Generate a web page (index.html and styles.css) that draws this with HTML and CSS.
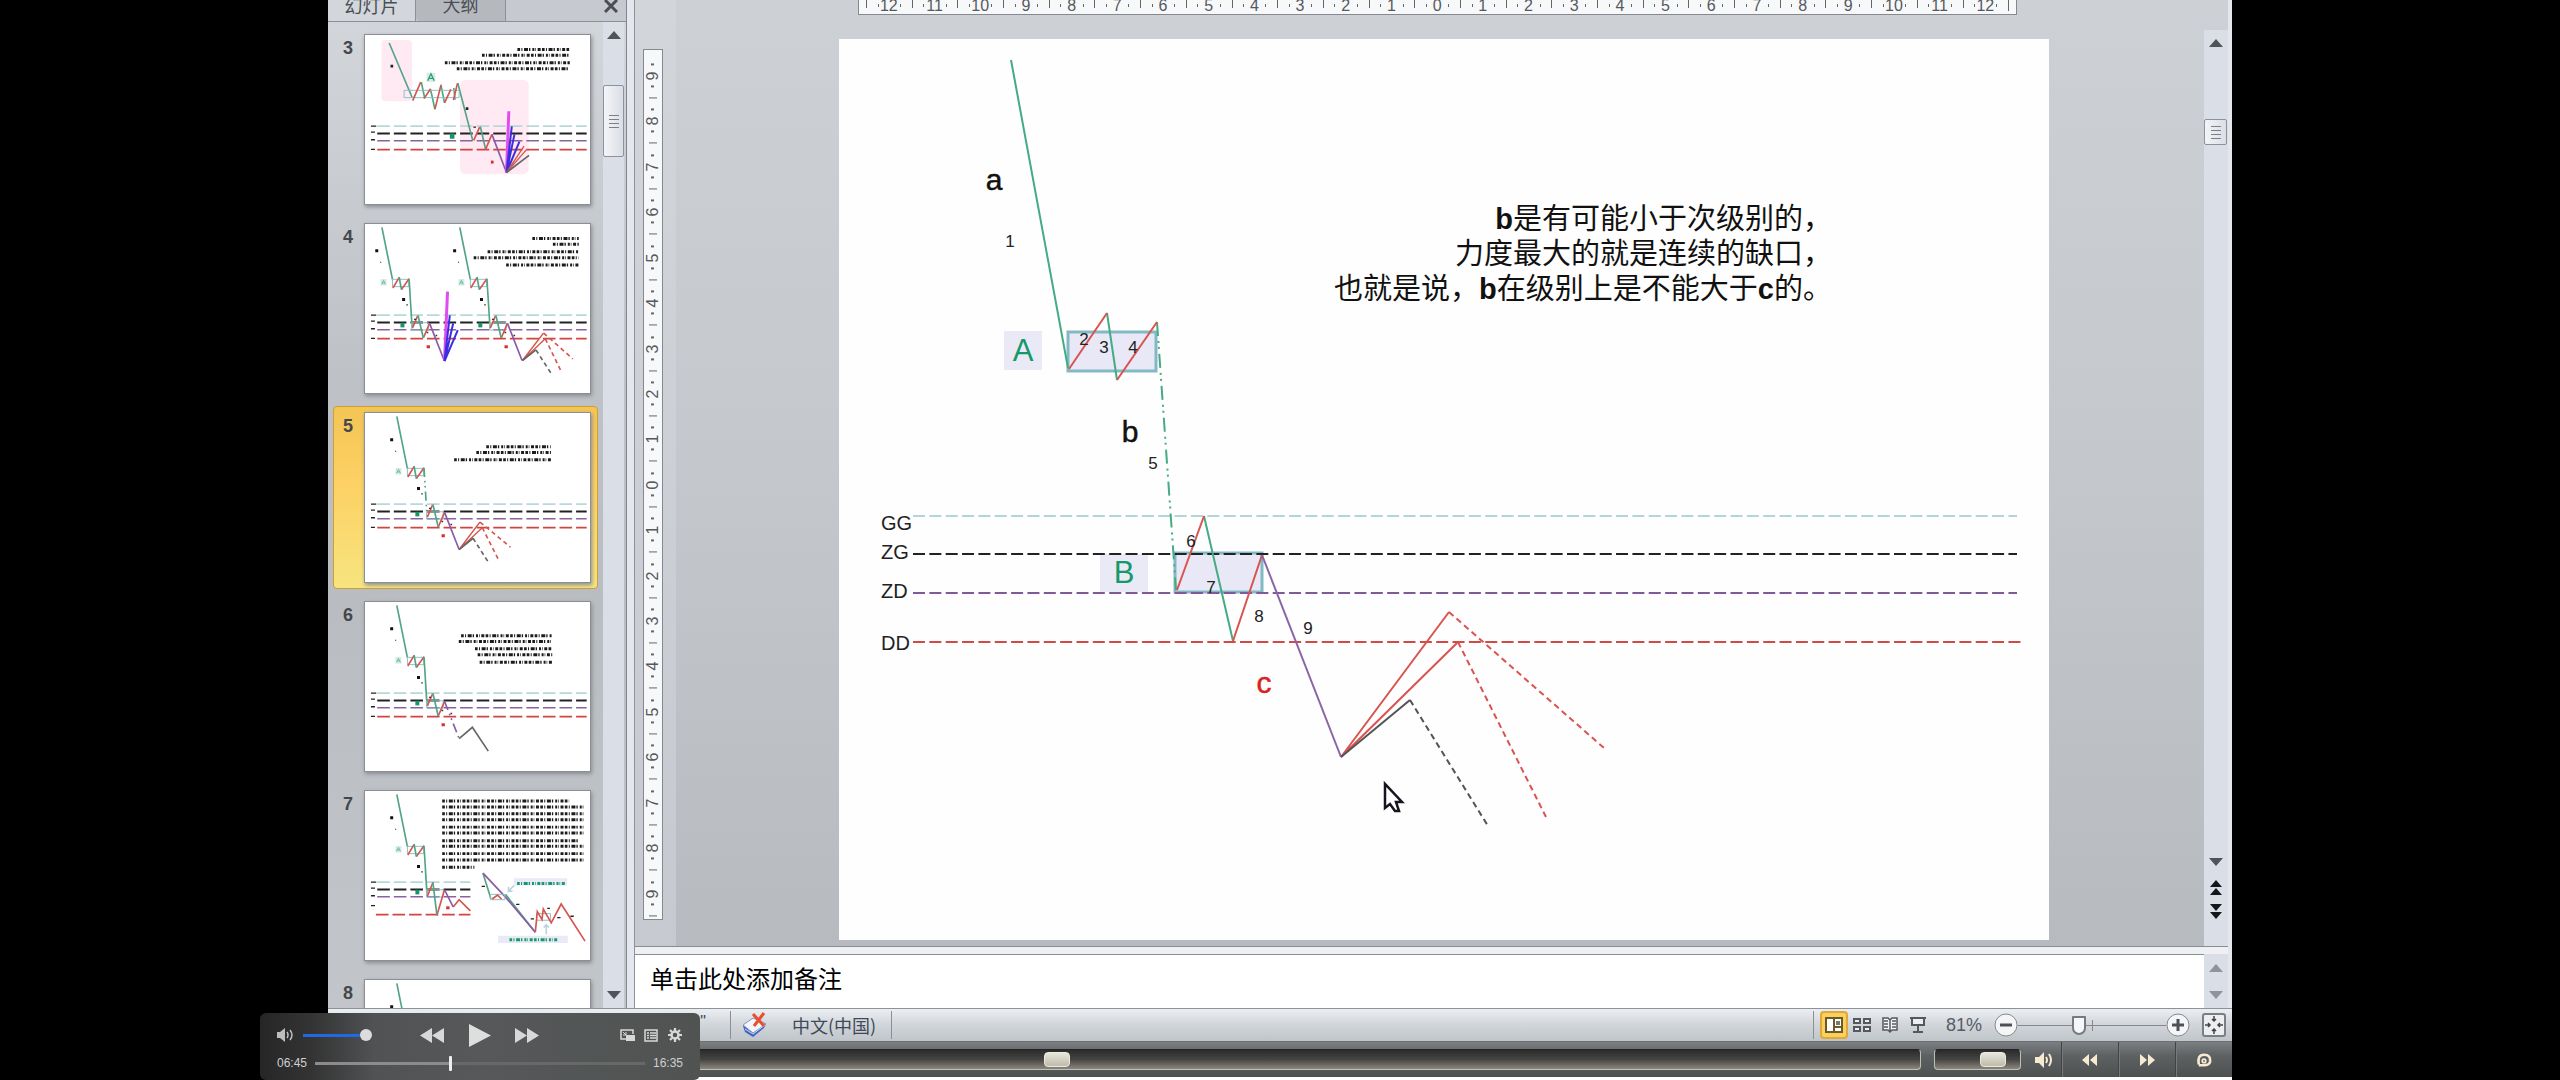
FILE: index.html
```html
<!DOCTYPE html>
<html lang="zh-CN">
<head>
<meta charset="utf-8">
<title>幻灯片</title>
<link rel="stylesheet" href="styles.css">
</head>
<body>
<svg class="defs" aria-hidden="true">
  <defs>
    <g id="levels">
      <g stroke="#222" stroke-width="4"><path d="M18 275h16M18 293h12M18 316h12M18 345h12"/></g>
      <g class="level-lines">
        <path stroke="#b9d8da" d="M37 275H669"/><path stroke="#222" stroke-width="6" d="M37 297H669"/>
        <path stroke="#8a62a0" d="M37 319H669"/><path stroke="#d4433f" d="M37 346H669"/>
      </g>
    </g>
    <g id="start">
      <path class="t-green" d="M96 10 128 168"/>
      <path class="t-box" d="M128 167h49v22h-49z"/>
      <path class="t-red" d="M129 193 148 162M155 198 178 165"/><path class="t-green" d="M148 160 155 198"/>
      <path fill="#d5ebe8" d="M92 166h18v20H92z"/><path stroke="#6fbca3" stroke-width="3" fill="none" d="M95 182l6-12 6 12M97 178h8"/>
      <path fill="#111" d="M76 76h9v9h-9zM91 114h3v3h-3zM157 223h9v9h-9zM170 242h4v4h-4z"/>
    </g>
    <g id="middle">
      <path class="t-box" d="M186 298h50v22h-50z"/>
      <path class="t-red" d="M188 314 204 277M221 344 240 300"/><path class="t-green" d="M205 276 221 344"/>
      <path fill="#16956a" d="M152 298h12v14h-12z"/><path fill="#333" d="M193 286h6v4h-6zM231 325h5v5h-5zM258 334h5v5h-5z"/>
      <path fill="#d4302c" d="M231 366h10v9h-10z"/>
    </g>
    <path id="fall" class="t-green" d="M178 165 187 310"/>
    <path id="last" class="t-purple" d="M240 300 284 412"/>
  </defs>
</svg>

<div class="app">
  <div class="workspace">
    <aside class="panel">
      <header class="tabs">
        <button class="tab active">幻灯片</button><button class="tab">大纲</button>
        <button class="close" aria-label="关闭"><svg width="14" height="13" viewBox="0 0 14 13"><path d="M1 0 13 12M13 0 1 12" stroke="#4b4e54" stroke-width="3"/></svg></button>
      </header>
      <div class="panel-body">
        <ol class="thumbs">
          <li class="item"><span class="num">3</span>
            <svg class="thumb" viewBox="0 0 679 510" preserveAspectRatio="none">
              <rect x="50" y="15" width="92" height="185" rx="12" fill="#ffe9f2"/><rect x="287" y="136" width="207" height="284" rx="16" fill="#ffe9f2"/>
              <use href="#levels"/>
              <path class="t-green" d="M73 24 143 190M170 142 180 190M198 165 211 224M229 150 240 205M268 160 272 195M280 145 325 318M348 276 364 345"/>
              <path class="t-box" d="M118 167h166v22H118z"/>
              <path class="t-red" d="M144 198 168 142M178 192 198 162M211 224 229 152M240 205 259 164M267 196 279 146M328 318 346 278M364 345 383 300"/>
              <path class="t-purple" d="M383 300 427 415"/>
              <path class="t-magenta" d="M427 415 434 230"/><path class="t-blue" d="M427 415 443 276M427 415 451 300M427 415 466 322"/>
              <path class="t-red thin" d="M427 415 480 335M427 415 488 345"/><path class="t-black" d="M427 415 495 363"/>
              <path fill="#d5ebe8" d="M186 114h26v28h-26z"/><path stroke="#2b9f78" stroke-width="4" fill="none" d="M189 138l10-21 10 21M193 131h12"/>
              <path fill="#16956a" d="M256 297h14v16h-14z"/><path fill="#222" d="M77 90h8v8h-8zM304 218h8v8h-8zM327 276h8v4h-8z"/><path fill="#d4302c" d="M380 379h8v9h-8z"/>
              <path class="scribble" d="M460 44H618M353 61H618M241 84H618M277 102H618"/>
            </svg></li>
          <li class="item"><span class="num">4</span>
            <svg class="thumb" viewBox="0 0 679 510" preserveAspectRatio="none">
              <use href="#levels"/>
              <g transform="translate(-45)"><use href="#start"/><use href="#fall"/><use href="#middle"/><use href="#last"/></g>
              <g transform="translate(190)"><use href="#start"/><use href="#fall"/><use href="#middle"/><use href="#last"/></g>
              <path class="t-magenta" d="M240 414 249 204"/><path class="t-blue" d="M240 414 256 276M240 414 266 300M240 414 280 320"/>
              <path class="t-red thin" d="M475 412 539 329M475 412 544 346"/><path class="t-black" d="M475 412 516 380"/>
              <path class="t-red dash" d="M539 329 627 407M544 346 593 447"/><path class="t-black dash" d="M516 380 561 450"/>
              <path class="scribble" d="M505 44H645M567 61H645M370 84H645M328 102H645M426 124H645"/>
            </svg></li>
          <li class="item selected"><span class="num">5</span>
            <svg class="thumb" viewBox="0 0 679 510" preserveAspectRatio="none">
              <use href="#levels"/><use href="#start"/><path class="t-green dashdot" d="M178 165 187 310"/><use href="#middle"/><use href="#last"/>
              <path class="t-red thin" d="M284 412 347 329M284 412 354 346"/><path class="t-black" d="M284 412 326 378"/>
              <path class="t-red dash" d="M347 329 439 405M354 346 405 447"/><path class="t-black dash" d="M326 378 372 450"/>
              <path class="scribble" d="M366 102H561M336 119H561M269 141H561"/>
            </svg></li>
          <li class="item"><span class="num">6</span>
            <svg class="thumb" viewBox="0 0 679 510" preserveAspectRatio="none">
              <use href="#levels"/><use href="#start"/><use href="#fall"/><use href="#middle"/>
              <path class="t-purple dashdot" d="M240 300 284 412"/><path class="t-black" d="M284 412 324 378 372 450"/>
              <path class="scribble" d="M290 102H565M283 119H565M332 141H565M340 159H565M346 182H565"/>
            </svg></li>
          <li class="item"><span class="num">7</span>
            <svg class="thumb" viewBox="0 0 679 510" preserveAspectRatio="none">
              <g stroke="#222" stroke-width="4"><path d="M18 275h16M18 293h12M18 316h12M18 346h12"/></g>
              <g class="level-lines"><path stroke="#b9d8da" d="M37 275H318"/><path stroke="#222" stroke-width="6" d="M37 297H318"/><path stroke="#8a62a0" d="M37 319H318"/><path stroke="#d4433f" d="M33 373H318"/></g>
              <use href="#start"/><use href="#fall"/>
              <path class="t-box" d="M186 298h50v22h-50z"/><path class="t-red" d="M188 318 205 276M217 375 240 298M266 350 284 328 318 362"/><path class="t-green" d="M205 276 217 375"/><path class="t-purple" d="M240 298 266 350"/>
              <path fill="#16956a" d="M152 298h12v14h-12z"/><path fill="#d4302c" d="M245 348h10v9h-10z"/>
              <path class="t-green" d="M356 248 380 325M424 312 514 426"/><path class="t-purple" d="M356 248 422 318 514 426"/>
              <path class="t-box" d="M378 312h44v16h-44zM518 370h42v20h-42z"/><path class="t-red" d="M384 326 400 314 412 326M514 426 520 364 534 388 538 356 562 398 592 341 664 453"/>
              <path fill="#e9e9f7" d="M450 263h160v22H450zM402 437h210v22H402z"/>
              <path class="scribble green" d="M459 279H603M436 449H582"/>
              <path stroke="#b9d5dc" stroke-width="5" fill="none" d="M450 285 433 302v-12M433 302h12M547 432V404M539 412l8-8 8 8"/>
              <path fill="#222" d="M352 286h10v4h-10zM456 340h10v4h-10zM550 352h8v4h-8zM500 384h10v4h-10zM580 380h10v4h-10zM620 376h10v4h-10z"/>
              <path class="scribble" d="M233 30H616M233 48H660M233 69H660M233 87H660M233 109H660M233 127H660M233 150H648M233 167H660M233 189H660M233 208H660M233 230H330"/>
            </svg></li>
          <li class="item"><span class="num">8</span>
            <svg class="thumb" viewBox="0 0 679 510" preserveAspectRatio="none"><use href="#levels"/><use href="#start"/><use href="#fall"/><use href="#middle"/></svg></li>
        </ol>
        <div class="vscroll left-scroll">
          <button class="arrow" aria-label="向上"><svg width="14" height="8"><path d="M7 0 14 8H0z"/></svg></button>
          <span class="grip"></span>
          <button class="arrow" aria-label="向下"><svg width="14" height="8"><path d="M7 8 14 0H0z"/></svg></button>
        </div>
      </div>
    </aside>

    <main class="editor">
      <div class="stage">
        <div class="ruler-col">
          <ol class="ruler vertical"><li>9</li><li>8</li><li>7</li><li>6</li><li>5</li><li>4</li><li>3</li><li>2</li><li>1</li><li>0</li><li>1</li><li>2</li><li>3</li><li>4</li><li>5</li><li>6</li><li>7</li><li>8</li><li>9</li></ol>
        </div>
        <div class="canvas">
          <ol class="ruler horizontal"><li>12</li><li>11</li><li>10</li><li>9</li><li>8</li><li>7</li><li>6</li><li>5</li><li>4</li><li>3</li><li>2</li><li>1</li><li>0</li><li>1</li><li>2</li><li>3</li><li>4</li><li>5</li><li>6</li><li>7</li><li>8</li><li>9</li><li>10</li><li>11</li><li>12</li></ol>
          <div class="slide">
            <svg class="drawing" viewBox="840 39 1210 901" preserveAspectRatio="none">
              <g class="labels-bg" fill="#eaeaf6"><path d="M1005 331h38v39h-38zM1101 554h48v38h-48z"/></g>
              <g fill="#e8e8f6" stroke="#82b9c4" stroke-width="3"><path d="M1069 332h88v39h-88zM1176 553h87v39h-87z"/></g>
              <g class="dashes">
                <path stroke="#b2d6d6" d="M914 516H2018"/><path stroke="#222" d="M914 554H2018"/>
                <path stroke="#80599b" d="M914 593H2018"/><path stroke="#d24a46" d="M914 642H2025"/>
              </g>
              <g fill="none" stroke-width="2">
                <path stroke="#45ab84" d="M1012 60 1069 368M1108 313 1118 380M1205 516 1234 641"/>
                <path stroke="#45ab84" stroke-dasharray="14 5 2 4 2 5" d="M1158 322 1177 590"/>
                <path stroke="#d9534f" d="M1070 369 1108 313M1118 380 1158 322M1178 590 1205 516M1234 641 1263 555M1342 757 1450 612M1342 757 1459 642"/>
                <path stroke="#8a65a6" d="M1263 555 1342 757"/>
                <path stroke="#555" d="M1342 757 1411 700"/>
                <path stroke="#555" stroke-dasharray="6 4" d="M1411 700 1489 826"/>
                <path stroke="#d9534f" stroke-dasharray="6 4" d="M1450 612 1605 748M1459 642 1547 817"/>
              </g>
              <g class="wave">
                <text x="995" y="190">a</text><text x="1131" y="442">b</text><text class="c" x="1265" y="693">c</text>
              </g>
              <g class="center-name"><text x="1024" y="361">A</text><text x="1125" y="583">B</text></g>
              <g class="index">
                <text x="1011" y="247">1</text><text x="1085" y="345">2</text><text x="1105" y="353">3</text><text x="1134" y="353">4</text><text x="1154" y="469">5</text>
                <text x="1192" y="547">6</text><text x="1212" y="593">7</text><text x="1260" y="622">8</text><text x="1309" y="634">9</text>
              </g>
              <g class="level-name"><text x="882" y="530">GG</text><text x="882" y="559">ZG</text><text x="882" y="598">ZD</text><text x="882" y="650">DD</text></g>
              <path fill="#fff" stroke="#15151f" stroke-width="2.5" d="M1386 784v24l5-4 5 7h4l-3-9h6z"/>
            </svg>
            <p class="remark"><b>b</b>是有可能小于次级别的，<br>力度最大的就是连续的缺口，<br>也就是说，<b>b</b>在级别上是不能大于<b>c</b>的。</p>
          </div>
        </div>
        <div class="vscroll right-scroll">
          <button class="arrow" aria-label="向上"><svg width="14" height="8"><path d="M7 0 14 8H0z"/></svg></button>
          <span class="grip"></span>
          <button class="arrow" aria-label="向下"><svg width="14" height="8"><path d="M7 8 14 0H0z"/></svg></button>
          <button class="arrow dark" aria-label="上一张幻灯片"><svg width="12" height="15"><path d="M6 0 12 7H0zM6 8l6 7H0z"/></svg></button>
          <button class="arrow dark" aria-label="下一张幻灯片"><svg width="12" height="15"><path d="M6 7 12 0H0zM6 15l6-7H0z"/></svg></button>
        </div>
      </div>
      <div class="notes">
        <p>单击此处添加备注</p>
        <div class="notes-scroll"><svg width="14" height="8"><path d="M7 0 14 8H0z"/></svg><svg width="14" height="8"><path d="M7 8 14 0H0z"/></svg></div>
      </div>
    </main>
  </div>

  <footer class="status">
    <span class="theme">"</span>
    <button class="spell" aria-label="拼写检查"><svg width="26" height="26" viewBox="0 0 26 26"><path d="M1 14 12 7l12 5-2 4-11 9L3 20z" fill="#3f66c0"/><path d="M1 13 11 6l13 6-13 9z" fill="#f3f5fb" stroke="#7f92c4"/><path d="M3 17l8 5 12-9" fill="none" stroke="#cfd9f3"/><path d="M11 2 22 14M22 1 12 14" stroke="#e8502c" stroke-width="3"/></svg></button>
    <button class="language">中文(中国)</button>
    <div class="views">
      <button class="view on" aria-label="普通视图"><svg width="18" height="16" viewBox="0 0 18 16"><path d="M1 1h16v14H1z" fill="#fff" stroke="#6b5a2a" stroke-width="2"/><path d="M9 1v14M9 10h8" stroke="#6b5a2a" stroke-width="2"/><path d="M11 4h4v4h-4z" fill="#777"/></svg></button>
      <button class="view" aria-label="幻灯片浏览"><svg width="18" height="16" viewBox="0 0 18 16" fill="#eee" stroke="#55585d" stroke-width="2"><path d="M1 2h6v4H1zM11 2h6v4h-6zM1 10h6v4H1zM11 10h6v4h-6z"/></svg></button>
      <button class="view" aria-label="阅读视图"><svg width="18" height="18" viewBox="0 0 18 18" fill="#f4f4f4" stroke="#55585d" stroke-width="1.5"><path d="M9 4 7 2H2v12h5l2 2 2-2h5V2h-5zM9 4v12M3 5h4M3 8h4M3 11h4M11 5h4M11 8h4M11 11h4"/></svg></button>
      <button class="view" aria-label="幻灯片放映"><svg width="18" height="16" viewBox="0 0 18 16" fill="#eee" stroke="#55585d" stroke-width="2"><path d="M1 1h16M3 2v6h12V2M9 8v6M4 15h10"/></svg></button>
    </div>
    <span class="percent">81%</span>
    <button class="round" aria-label="缩小"><svg width="24" height="24" viewBox="0 0 24 24"><circle cx="12" cy="12" r="11" fill="#f4f5f6" stroke="#85898f"/><path d="M6 12h12" stroke="#4d5056" stroke-width="3"/></svg></button>
    <input class="zoom" type="range" aria-label="显示比例" min="0" max="100" value="40">
    <button class="round" aria-label="放大"><svg width="24" height="24" viewBox="0 0 24 24"><circle cx="12" cy="12" r="11" fill="#f4f5f6" stroke="#85898f"/><path d="M6 12h12M12 6v12" stroke="#4d5056" stroke-width="3"/></svg></button>
    <button class="fit" aria-label="适应窗口"><svg width="24" height="24" viewBox="0 0 24 24"><rect x="1" y="1" width="22" height="22" rx="2" fill="#eceef0" stroke="#7b7f85" stroke-width="2"/><path d="M12 3v5M10 6l2 2 2-2M12 21v-5M10 18l2-2 2 2M3 12h5M6 10l2 2-2 2M21 12h-5M18 10l-2 2 2 2" fill="none" stroke="#3f4247" stroke-width="1.5"/></svg></button>
  </footer>

  <div class="playbar">
    <input class="trough seek" type="range" aria-label="播放进度" min="0" max="1000" value="457">
    <input class="trough vol" type="range" aria-label="音量" min="0" max="100" value="76">
    <button class="speaker" aria-label="静音"><svg width="20" height="16" viewBox="0 0 20 16"><path d="M1 5h4l5-5v16l-5-5H1z" fill="#f6ead0"/><path d="M12 5q2 3 0 6M15 2q4 6 0 12" fill="none" stroke="#f6ead0" stroke-width="2"/></svg></button>
    <button aria-label="后退"><svg width="16" height="12" fill="#f6ead0"><path d="M7 0v12L0 6zM15 0v12L8 6z"/></svg></button>
    <button aria-label="前进"><svg width="16" height="12" fill="#f6ead0"><path d="M1 0v12l7-6zM9 0v12l7-6z"/></svg></button>
    <button aria-label="循环"><svg width="16" height="14" viewBox="0 0 18 16" fill="none" stroke="#f6ead0" stroke-width="3"><path d="M3 13Q1 2 9 2t7 8q-1 4-7 4H3"/><circle cx="9" cy="9" r="2" stroke-width="2"/></svg></button>
  </div>
</div>

<section class="controller" aria-label="播放控制">
  <div class="row">
    <svg width="17" height="14" viewBox="0 0 17 14"><path d="M0 4h3l5-4v14l-5-4H0z" fill="#bdbdbd"/><path d="M10 4q2 3 0 6M13 2q4 5 0 10" fill="none" stroke="#bdbdbd" stroke-width="1.5"/></svg>
    <input class="loud" type="range" aria-label="控制器音量" value="100">
    <button class="rew" aria-label="快退"><svg width="24" height="15" fill="#d8d8d8"><path d="M12 0v15L0 7.500zM24 0v15L12 7.500z"/></svg></button>
    <button class="play" aria-label="播放"><svg width="22" height="23" fill="#dedede"><path d="M0 0 22 11.500 0 23z"/></svg></button>
    <button class="ffw" aria-label="快进"><svg width="24" height="15" fill="#d8d8d8"><path d="M0 0v15l12-7.500zM12 0v15l12-7.500z"/></svg></button>
    <button class="pip" aria-label="画中画"><svg width="15" height="13" viewBox="0 0 15 13"><path d="M6 10H1V1h12v4" fill="none" stroke="#d8d8d8" stroke-width="1.500"/><path d="M6 6h9v6H6z" fill="#d8d8d8"/><path d="M3 3l3 3M6 3v3H3" stroke="#d8d8d8" fill="none"/></svg></button>
    <button class="list" aria-label="列表"><svg width="14" height="13" viewBox="0 0 14 13"><path d="M1 1h12v11H1z" fill="none" stroke="#d8d8d8" stroke-width="1.500"/><path d="M3 4h2M6 4h6M3 6.500h2M6 6.500h6M3 9h2M6 9h6" stroke="#d8d8d8" stroke-width="1.500"/></svg></button>
    <button class="gear" aria-label="设置"><svg width="14" height="14" viewBox="-7 -7 14 14"><circle r="3.500" fill="none" stroke="#d8d8d8" stroke-width="2.500"/><path d="M0-7v3M0 4v3M-7 0h3M4 0h3M-5-5l2 2M3 3l2 2M-5 5l2-2M3-3l2-2" stroke="#d8d8d8" stroke-width="2.200"/></svg></button>
  </div>
  <div class="row times">
    <span>06:45</span><input class="progress" type="range" aria-label="时间轴" min="0" max="995" value="407"><span>16:35</span>
  </div>
</section>
</body>
</html>
```

FILE: styles.css
```css
* { box-sizing: border-box; }
html, body { margin: 0; height: 100%; }
body {
  background: #000;
  padding: 0 328px;
  overflow: hidden;
  position: relative;
  font-family: "Liberation Sans", "Noto Sans CJK SC", sans-serif;
}
button { border: 0; padding: 0; margin: 0; background: none; font: inherit; color: inherit; display: flex; align-items: center; justify-content: center; }
ol { list-style: none; margin: 0; padding: 0; }
svg { display: block; flex: none; }
.defs { position: absolute; width: 0; height: 0; }

.app { height: 100vh; display: flex; flex-direction: column; background: #e4e7ee; border-bottom: 3px solid #fff; }
.workspace { flex: 1; min-height: 0; display: flex; border-bottom: 1px solid #8d9299; }

/* slide list */
.panel { width: 299px; flex: none; display: flex; flex-direction: column; background: linear-gradient(#d3d6db, #bfc3c8 35%, #b9bdc1 60%, #c2c6ca); border-right: 1px solid #80868d; }
.tabs { height: 22px; flex: none; display: flex; align-items: stretch; background: #c6cad0; border-bottom: 1px solid #8b9097; overflow: hidden; color: #4a4e56; font-size: 18px; line-height: 18px; }
.tab { width: 90px; align-items: flex-end; padding-bottom: 6px; background: #b5b9be; border-right: 1px solid #8b9097; border-radius: 0 0 0 4px; }
.tab.active { width: 88px; background: #d3d6db; height: 22px; }
.close { margin: 0 8px 9px auto; }
.panel-body { flex: 1; min-height: 0; display: flex; }
.thumbs { flex: 1; min-width: 0; overflow: hidden; padding: 6px 5px 0; display: flex; flex-direction: column; gap: 6px; }
.item { flex: none; display: grid; grid-template-columns: 24px 1fr; padding: 5px 6px; border: 1px solid transparent; border-radius: 4px; }
.selected { background: linear-gradient(#f3c555, #fdd063 40%, #f7e47f); border-color: #cf9f33; }
.num { font-weight: bold; font-size: 18px; line-height: 28px; color: #44474c; padding-left: 3px; }
.thumb { width: 100%; height: 171px; background: #fff; border: 1px solid #8b8f94; box-shadow: 1px 2px 4px #888c92; }
.t-green, .t-red, .t-purple, .t-black, .t-blue, .t-magenta { fill: none; stroke-width: 5px; }
.t-green { stroke: #52a485; }
.t-red { stroke: #d5564c; }
.t-purple { stroke: #8a5aa8; }
.t-black { stroke: #666; }
.t-blue { stroke: #3a2fe0; stroke-width: 6px; }
.t-magenta { stroke: #e04cf0; stroke-width: 9px; }
.t-box { fill: none; stroke: #8fc0c8; stroke-width: 3px; }
.thin { stroke-width: 4px; }
.dash { stroke-dasharray: 13 10; }
.dashdot { stroke-dasharray: 28 12 5 10 5 12; }
.level-lines { stroke-width: 5px; stroke-dasharray: 38 12; }
.scribble { fill: none; stroke: #1c1c1c; stroke-width: 9px; stroke-dasharray: 8 4 3 5 12 3 4 6 6 3 2 5 9 4; }
.scribble.green { stroke: #159a68; }

/* scroll bars */
.vscroll { display: flex; flex-direction: column; align-items: center; background: #dadee7; fill: #4f535a; }
.left-scroll { width: 21px; margin-right: 2px; }
.arrow { width: 100%; height: 26px; }
.grip { width: 100%; border: 1px solid #8d929b; border-radius: 2px; background: repeating-linear-gradient(#7b8087 0 1px, transparent 1px 4px) center / 10px 13px no-repeat, linear-gradient(90deg, #f4f5f8, #dadee5); }
.left-scroll .grip { height: 72px; margin: 37px 0 auto; }
.right-scroll { width: 24px; margin-top: 30px; padding-right: 1px; }
.right-scroll .grip { height: 26px; margin: 63px 0 auto; }
.arrow.dark { fill: #15161a; height: 24px; }
.right-scroll .arrow.dark:last-child { margin-bottom: 23px; }

/* editor */
.editor { flex: 1; min-width: 0; margin: 0 4px 0 7px; display: flex; flex-direction: column; border-left: 1px solid #8d929b; }
.stage { flex: 1; min-height: 0; display: flex; background: linear-gradient(#cdd1d5, #c5c9cd 45%, #b7bbc0); border-bottom: 1px solid #888d90; }
.ruler-col { width: 41px; flex: none; padding: 49px 0 26px 8px; background: linear-gradient(#d2d5da, #c6cad0); }
.canvas { flex: 1; min-width: 0; display: flex; flex-direction: column; padding: 0 155px 6px 163px; }
.ruler { display: flex; background: #f7f8f9; border: 1px solid #85898f; color: #55585d; font-size: 16px; font-family: "Liberation Sans", sans-serif; }
.ruler li { flex: 1; display: flex; align-items: center; justify-content: center; }
.horizontal { height: 15px; flex: none; margin: 0 32px 24px 19px; border-top: 0; padding: 0 7px; align-items: flex-start; }
.horizontal li { height: 11px; line-height: 11px; background: linear-gradient(#666, #666) left top / 1px 8px no-repeat, linear-gradient(#666, #666) 26% 4px / 1px 3px no-repeat, linear-gradient(#666, #666) 76% 4px / 1px 3px no-repeat; }
.horizontal li:last-child { border-right: 1px solid #666; }
.vertical { width: 20px; height: 100%; flex-direction: column; padding: 3px 0; }
.vertical li { writing-mode: vertical-rl; transform: rotate(180deg); line-height: 18px; background: linear-gradient(#666, #666) center top / 8px 1px no-repeat, linear-gradient(#666, #666) center 26% / 3px 2px no-repeat, linear-gradient(#666, #666) center 76% / 3px 2px no-repeat; }
.slide { flex: 1; min-height: 0; position: relative; background: #fefefe; }
.drawing { width: 100%; height: 100%; }
.dashes { stroke-width: 2px; stroke-dasharray: 12 4.350; }
.wave text { font-size: 30px; text-anchor: middle; fill: #111; stroke: #111; stroke-width: 0.5px; }
.wave .c { fill: #d8241f; stroke: #d8241f; }
.center-name text { font-size: 31px; text-anchor: middle; fill: #16996a; }
.index text { font-size: 17px; text-anchor: middle; fill: #222; }
.level-name text { font-size: 20px; fill: #222; }
.remark { position: absolute; top: 163px; right: 217px; margin: 0; text-align: right; font-size: 29px; line-height: 35px; color: #111; white-space: nowrap; }
.notes { height: 61px; flex: none; display: flex; border-top: 7px solid #eef0f4; background: #fff; box-shadow: inset 0 1px #888d90; }
.notes p { flex: 1; margin: 0; padding: 8px 0 0 15px; font-size: 24px; line-height: 36px; color: #000; }
.notes-scroll { width: 24px; display: flex; flex-direction: column; align-items: center; justify-content: space-between; padding: 10px 0 9px; background: #dadee7; fill: #8f949c; }

/* status bar */
.status { height: 33px; flex: none; display: flex; align-items: center; background: linear-gradient(#eceff2, #d3d7dc 45%, #c0c5ca); color: #404958; border-bottom: 1px solid #6d7074; }
.theme { width: 403px; height: 28px; border-right: 1px solid #8b9097; text-align: right; padding-right: 24px; font-size: 16px; line-height: 22px; }
.spell { margin-left: 11px; }
.language { height: 28px; font-size: 18px; padding: 0 15px 0 24px; border-right: 1px solid #8b9097; font-family: "Noto Sans CJK SC", sans-serif; }
.views { margin-left: auto; height: 28px; display: flex; padding-left: 6px; border-left: 1px solid #8b9097; }
.view { width: 28px; }
.view.on { background: #fbd15c; border: 2px solid #e0a83a; border-radius: 4px; }
.percent { width: 62px; text-align: right; padding-right: 12px; font-size: 18px; color: #565d68; }
.zoom { width: 148px; }
.fit { margin: 0 6px 0 12px; }

/* range inputs */
input[type="range"] { appearance: none; -webkit-appearance: none; margin: 0; background: none; flex: none; }
input[type="range"]::-webkit-slider-thumb { -webkit-appearance: none; }
.zoom { height: 20px; background: linear-gradient(#85898f, #85898f) center / 100% 1px no-repeat, linear-gradient(#85898f, #85898f) 50% center / 1px 11px no-repeat !important; }
.zoom::-webkit-slider-thumb { width: 14px; height: 19px; background: #f6f7f8; border: 2px solid #777b81; border-radius: 1px 1px 7px 7px; }

.playbar { height: 35px; flex: none; display: flex; align-items: stretch; background: linear-gradient(#7c7f82, #5e6162 40%, #4e5151); }
.playbar button { width: 57px; border-left: 1px solid #414445; box-shadow: inset 1px 0 #767a7b; }
.playbar .speaker { width: 40px; padding-left: 6px; border: 0; box-shadow: none; }
input.trough { height: 21px; margin-top: 7px; border: 1px solid #bfc0b2; border-top-color: #222; border-radius: 4px; background: linear-gradient(#2b2b2b, #464543 50%, #8b877e); }
input.seek { flex: 1; border-left: 0; }
input.vol { width: 87px; margin-left: 13px; }
.trough::-webkit-slider-thumb { width: 26px; height: 15px; border-radius: 4px; border: 1px solid #eceada; background: linear-gradient(#e8e7dd, #bdbbaa); }

/* floating player controller */
.controller { position: absolute; left: 260px; bottom: 0; width: 440px; height: 67px; border-radius: 6px; padding: 0 17px; background: linear-gradient(90deg, #262626, #343434 12%, #505254 26%, #565859 50%, #505352); color: #d0d0d0; font-size: 12px; }
.row { display: flex; align-items: center; height: 44px; }
.times { height: 12px; gap: 8px; line-height: 12px; }
.loud { width: 69px; height: 12px; margin-left: 9px !important; background: linear-gradient(#2268e2, #2268e2) left center / 58px 3px no-repeat !important; }
.loud::-webkit-slider-thumb { width: 12px; height: 12px; border-radius: 6px; background: #dcdcdc; }
.rew { margin-left: 48px; }
.play { margin-left: 25px; }
.ffw { margin-left: 24px; }
.pip { margin-left: 81px; }
.list { margin-left: 9px; }
.gear { margin-left: 10px; }
.progress { flex: 1 1 auto !important; min-width: 0; height: 16px; background: linear-gradient(90deg, #8c8c8c 41%, #676868 41%) center / 100% 3px no-repeat !important; }
.progress::-webkit-slider-thumb { width: 3px; height: 15px; border-radius: 1px; background: #eee; }
```
